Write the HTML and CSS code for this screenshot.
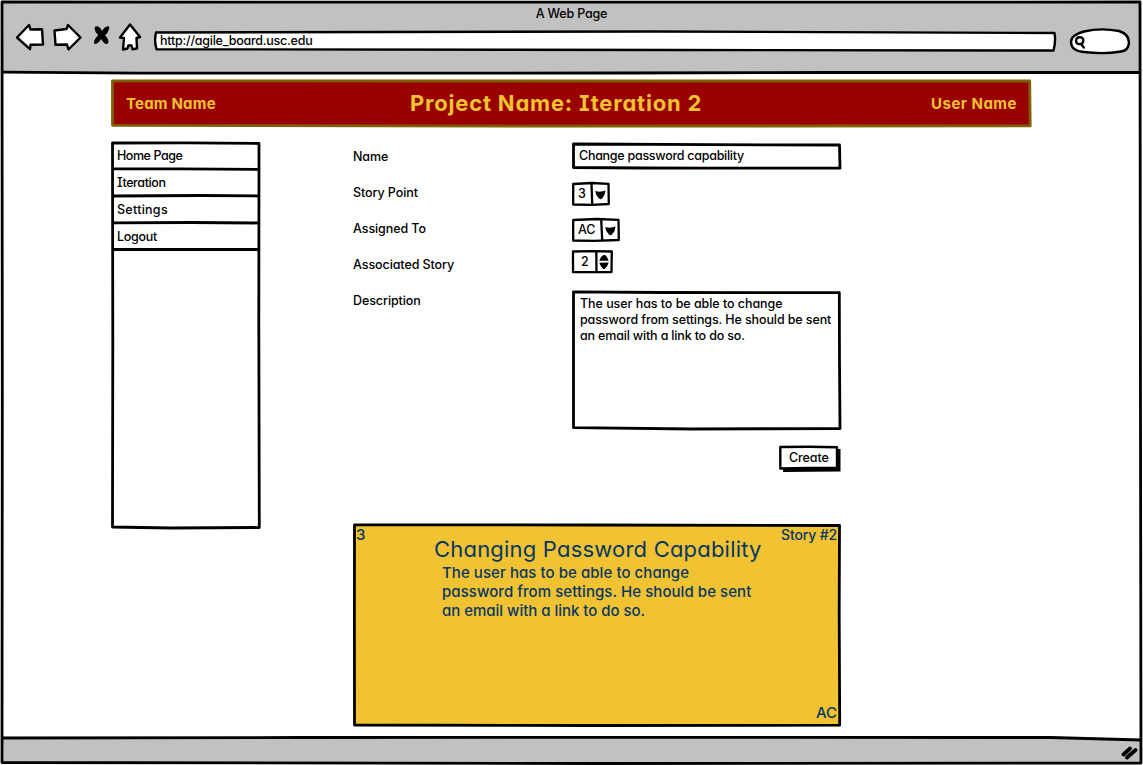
FILE: index.html
```html
<!DOCTYPE html>
<html lang="en">
<head>
<meta charset="utf-8">
<title>A Web Page</title>
<link rel="stylesheet" href="styles.css">
</head>
<body>
<div class="window">
  <svg class="ink" viewBox="0 0 1143 765">
    <path class="chrome-fill" d="M2 2H1140V73H2ZM2 738L1050 737L1141 740V763L2 762Z"/>
    <path class="line" d="M2 2L600 2.200L1140 2L1140.500 420L1141 763L600 763.500L2 762.500L2.300 400Z"/>
    <path class="line" d="M2 72.200L140 73.200L620 73L830 72.500L1140 72.500M2 738L300 737.500L700 737.300L1050 737.500L1141 740"/>
  </svg>

  <header class="chrome">
    <div class="window-title"><span class="t-title">A Web Page</span></div>
    <div class="toolbar">
      <svg class="nav-icons" width="130" height="32" viewBox="0 0 130 32">
        <path class="shape" d="M3 14.500L15 2L16.500 6.500L28 6.200L29 21.500L16.500 21.800L16 26.200Z"/>
        <path class="shape" d="M40.500 7.500L52.500 6L54 2L66.500 14.500L54.500 26.500L53 21.500L41.500 21.800Q41 15 40.500 7.500Z"/>
        <path class="solid" d="M80.500 5.500Q80.500 3 83 3.200Q86.500 4 88 8Q90 4 94 3.200Q96 3.500 95 6Q94 10 91 12.300Q94.500 16 94.500 19Q94 21.500 91.500 21Q89 19.500 87 16Q85.500 19.500 82 21Q79.500 21.300 80 18.500Q81 15 84.200 12.300Q81 9.500 80.500 5.500Z"/>
        <path class="shape" d="M116 1.500L106 14.500L110 15L109 26.500L113.500 25.500L114.300 22.500H117.500L118.500 26.200L123 25.500L122.500 15L126 14Z"/>
      </svg>
      <div class="address">
        <svg class="ink" viewBox="0 0 904 22">
          <path class="shape" d="M3 2.500L500 1.500L901.500 3Q903 11 900.500 20.500L520 20L3.500 19.200Q1 11 3 2.500Z"/>
        </svg>
        <span class="t-url">http://agile_board.usc.edu</span>
      </div>
      <svg class="search" width="62" height="28" viewBox="0 0 62 28">
        <path class="shape" d="M15 4.500Q32 .5 50 4Q60 7 60 16Q59 24 52 24.500Q35 27.500 15 25Q2 24 2 15Q2 8 15 4.500Z"/>
        <path class="glass" d="M10.500 10.200Q14.500 10.200 14.300 13.800Q14 17.300 10.500 17.200Q6.800 16.800 7 13.500Q7.500 10.400 10.500 10.200M12.500 17.500L14.800 20.500"/>
      </svg>
    </div>
  </header>

  <main class="page">
    <div class="banner">
      <svg class="ink" viewBox="0 0 920 47">
        <path class="banner-shape" d="M1.500 .9L500 1L918.700 1L919.200 45.800L400 46.200L1.500 45.300Z"/>
      </svg>
      <span class="banner-side"><span class="t-team">Team Name</span></span>
      <h1 class="banner-title">Project Name: Iteration 2</h1>
      <span class="banner-side right"><span class="t-user">User Name</span></span>
    </div>

    <div class="columns">
      <nav class="sidebar">
        <svg class="ink" viewBox="0 0 149 387">
          <path class="line" d="M1.500 1L75 .8L148 1.500L147.800 180L148.300 385.500L60 386L1.500 385L1.800 200ZM1.500 26.800L70 26.800L148 27.500M1.500 54L90 53.500L148 54M1.500 80.800L80 80.500L148 81M1.500 107.500L60 107.500L148 107.500"/>
        </svg>
        <a class="nav-item"><span class="t-home">Home Page</span></a>
        <a class="nav-item"><span class="t-iter">Iteration</span></a>
        <a class="nav-item"><span class="t-set">Settings</span></a>
        <a class="nav-item"><span class="t-logout">Logout</span></a>
      </nav>

      <section class="content">
        <form class="form">
          <label class="label">Name</label>
          <div class="field name-field">
            <svg class="ink" viewBox="0 0 269 27">
              <path class="line" d="M1.500 1L140 1.700L267.500 2L268 25.200L140 25.200L70 25L1.500 24.500Z"/>
            </svg>
            <span class="t-change">Change password capability</span>
          </div>

          <label class="label">Story Point</label>
          <div class="field point-field">
            <svg class="ink" viewBox="0 0 38 24">
              <path class="line thin" d="M1.200 2L20 1L36.500 1.800L36.800 22L20 22.800L1.200 22.500ZM19.500 1.500L20.200 22.500"/>
              <path class="solid" d="M23.200 9Q28.500 10.500 33.500 8.500Q33.500 12.500 30 16.500Q28.500 18 27 16.500Q23.500 13 23.200 9Z"/>
            </svg>
            <span>3</span>
          </div>

          <label class="label">Assigned To</label>
          <div class="field assigned-field">
            <svg class="ink" viewBox="0 0 48 24">
              <path class="line thin" d="M1.200 2L25 1L46.500 1.800L46.800 22L22 22.800L1.200 22.500ZM29.200 1.500L30.200 22.500"/>
              <path class="solid" d="M33.200 9Q38.500 10.500 43.500 8.500Q43.500 12.500 40 16.500Q38.500 18 37 16.500Q33.500 13 33.200 9Z"/>
            </svg>
            <span>AC</span>
          </div>

          <label class="label">Associated Story</label>
          <div class="field story-field">
            <svg class="ink" viewBox="0 0 42 24">
              <path class="line thin" d="M1 1.500L20 1.200L39.800 1.500L39.500 22L20 22.200L1 22.200ZM24.300 1.500L24.500 22"/>
              <path class="solid" d="M27.200 10.700Q28 7 31 5.300Q33.500 4.300 35 7L36.700 10.700ZM27.200 12.800L36.700 12.500Q35.500 17 32.500 19H31Q29 17 27.200 12.800Z"/>
            </svg>
            <span>2</span>
          </div>

          <label class="label">Description</label>
          <div class="field description-field">
            <svg class="ink" viewBox="0 0 269 139">
              <path class="line" d="M1.500 .8L90 1.500L267.300 1.700L267.500 70L268 137.500L120 138L1.500 136.700L1.500 70Z"/>
            </svg>
            <p class="text"><span class="t-d1">The user has to be able to change</span><br><span class="t-d2">password from settings. He should be sent</span><br><span class="t-d3">an email with a link to do so.</span></p>
          </div>
        </form>

        <div class="create">
          <svg class="ink" viewBox="0 0 62 26">
            <path class="solid" d="M4 3H61.500V25.500L4 26Z"/>
            <path class="shape" d="M1.300 1L30 .8L58 1.200L58 22L30 22L1.300 22.500Z"/>
          </svg>
          <span>Create</span>
        </div>

        <article class="card">
          <svg class="ink" viewBox="0 0 488 203">
            <path class="card-shape" d="M1.500 .8L240 1L486.500 1.500L486.200 90L486.700 201.200L240 201.500L1.500 201L1.400 100Z"/>
          </svg>
          <div class="card-top"><span class="t-three">3</span><span class="t-story">Story #2</span></div>
          <div class="card-body">
            <h2 class="card-title">Changing Password Capability</h2>
            <p class="card-text"><span class="t-c1">The user has to be able to change</span><br><span class="t-c2">password from settings. He should be sent</span><br><span class="t-c3">an email with a link to do so.</span></p>
          </div>
          <div class="card-owner">AC</div>
        </article>
      </section>
    </div>
  </main>

  <footer class="status">
    <svg width="18" height="16" viewBox="0 0 18 16">
      <path class="grip" d="M2.500 9.500L9 3.500M6 12.500L14.500 5"/>
    </svg>
  </footer>
</div>
</body>
</html>
```
FILE: styles.css
```css
* { box-sizing: border-box; }
body {
  margin: 0;
  background: #fff;
  color: #000;
  font: 500 12.5px/16px Inter, "Open Sans", sans-serif;
  font-feature-settings: "cv11", "cv08", "calt" 0;
  letter-spacing: -0.08px;
}
h1, h2, p { margin: 0; }

/* hand-drawn outlines sit behind each box's text */
.ink { position: absolute; inset: 0; width: 100%; height: 100%; z-index: -1; overflow: visible; }
.line { fill: none; stroke: #000; stroke-width: 2.8; stroke-linejoin: round; }
.thin { stroke-width: 2.3; }
.shape { fill: #fff; stroke: #000; stroke-width: 2.4; stroke-linejoin: round; }
.solid { fill: #000; }
.chrome-fill { fill: #c1c1c1; }
.glass { fill: none; stroke: #000; stroke-width: 2.3; stroke-linecap: round; }
.grip { fill: none; stroke: #000; stroke-width: 3.8; stroke-linecap: round; }

.window {
  position: relative;
  z-index: 0;
  width: 1143px;
  height: 765px;
  display: flex;
  flex-direction: column;
  overflow: hidden;
  white-space: nowrap;
}
.chrome { height: 74px; padding-top: 6px; }
.window-title { height: 16px; line-height: 15px; text-align: center; }
.toolbar { display: flex; padding: 0 0 0 14px; }
.nav-icons { margin-top: 1px; }
.address { position: relative; width: 904px; height: 22px; margin: 8px 0 0 9px; padding-left: 7px; line-height: 21px; }
.search { margin: 5px 0 0 12px; }

.page { flex: 1; padding: 6px 112px 0 111px; }
.banner {
  position: relative;
  height: 47px;
  padding: 0 14px 0 15px;
  display: grid;
  grid-template-columns: 150px 1fr 150px;
  align-items: center;
  color: #f1c232;
  font-weight: 700;
  font-size: 15px;
}
.banner-shape { fill: #900; stroke: #7f6000; stroke-width: 2.8; stroke-linejoin: round; }
.banner-side { padding-top: 1px; }
.banner-title { font-size: 22px; line-height: 28px; padding: 0 0 1px 134px; letter-spacing: .8px; }
.right { text-align: right; }

.columns { display: flex; gap: 93px; margin-top: 15px; align-items: flex-start; }
.sidebar { position: relative; width: 149px; height: 387px; display: flex; flex-direction: column; }
.nav-item { height: 27px; line-height: 27px; padding-left: 6px; }

.content { width: 488px; display: flex; flex-direction: column; margin-top: -3px; }
.form { display: grid; grid-template-columns: 219px 269px; grid-template-rows: repeat(4, 36px) 147px; }
.label { line-height: 35px; }
.field { position: relative; display: flex; align-items: center; }
.name-field { height: 27px; margin-top: 4px; padding: 0 0 1px 7px; }
.point-field { width: 38px; height: 24px; margin-top: 7px; padding: 0 0 1px 6px; }
.assigned-field { width: 48px; height: 24px; margin-top: 7px; padding: 0 0 1px 6px; }
.story-field { width: 42px; height: 24px; margin-top: 3px; padding: 0 0 0 9px; }
.description-field { height: 139px; margin-top: 8px; padding: 5px 0 0 8px; align-items: flex-start; }

.create { position: relative; align-self: flex-end; width: 62px; height: 26px; margin-top: 16px; padding-left: 10px; line-height: 23px; }

.card { position: relative; height: 203px; margin-top: 52px; padding: 2px 4px; color: #073763; font-size: 15px; font-weight: 450; display: flex; flex-direction: column; }
.card-shape { fill: #f1c232; stroke: #000; stroke-width: 2.8; stroke-linejoin: round; }
.card-top { display: flex; justify-content: space-between; height: 10px; line-height: 18px; }
.card-body { flex: 1; padding-left: 77px; }
.card-title { font-weight: 400; font-size: 22px; line-height: 26px; letter-spacing: .2px; }
.card-text { padding: 1px 0 0 8px; line-height: 19px; }
.card-owner { text-align: right; line-height: 20px; margin-bottom: 2px; }

/* per-label tracking */
.t-title { letter-spacing: -.18px; }
.t-url { letter-spacing: -.24px; }
.t-team { letter-spacing: .2px; }
.t-user { letter-spacing: .5px; }
.t-home { letter-spacing: -.45px; }
.t-iter { letter-spacing: -.4px; }
.t-set { letter-spacing: .27px; }
.t-logout { letter-spacing: -.3px; }
.t-change { letter-spacing: -.27px; }
.t-d1 { letter-spacing: -.05px; }
.t-d2 { letter-spacing: -.11px; }
.t-d3 { letter-spacing: -.17px; }
.t-story { font-size: 14px; letter-spacing: -.15px; }
.t-three { margin-left: -1px; }
.t-c1, .t-c2 { letter-spacing: .06px; }
.t-c3 { letter-spacing: -.03px; }

.status { height: 27px; padding: 7px 4px 0 0; display: flex; justify-content: flex-end; }
```
